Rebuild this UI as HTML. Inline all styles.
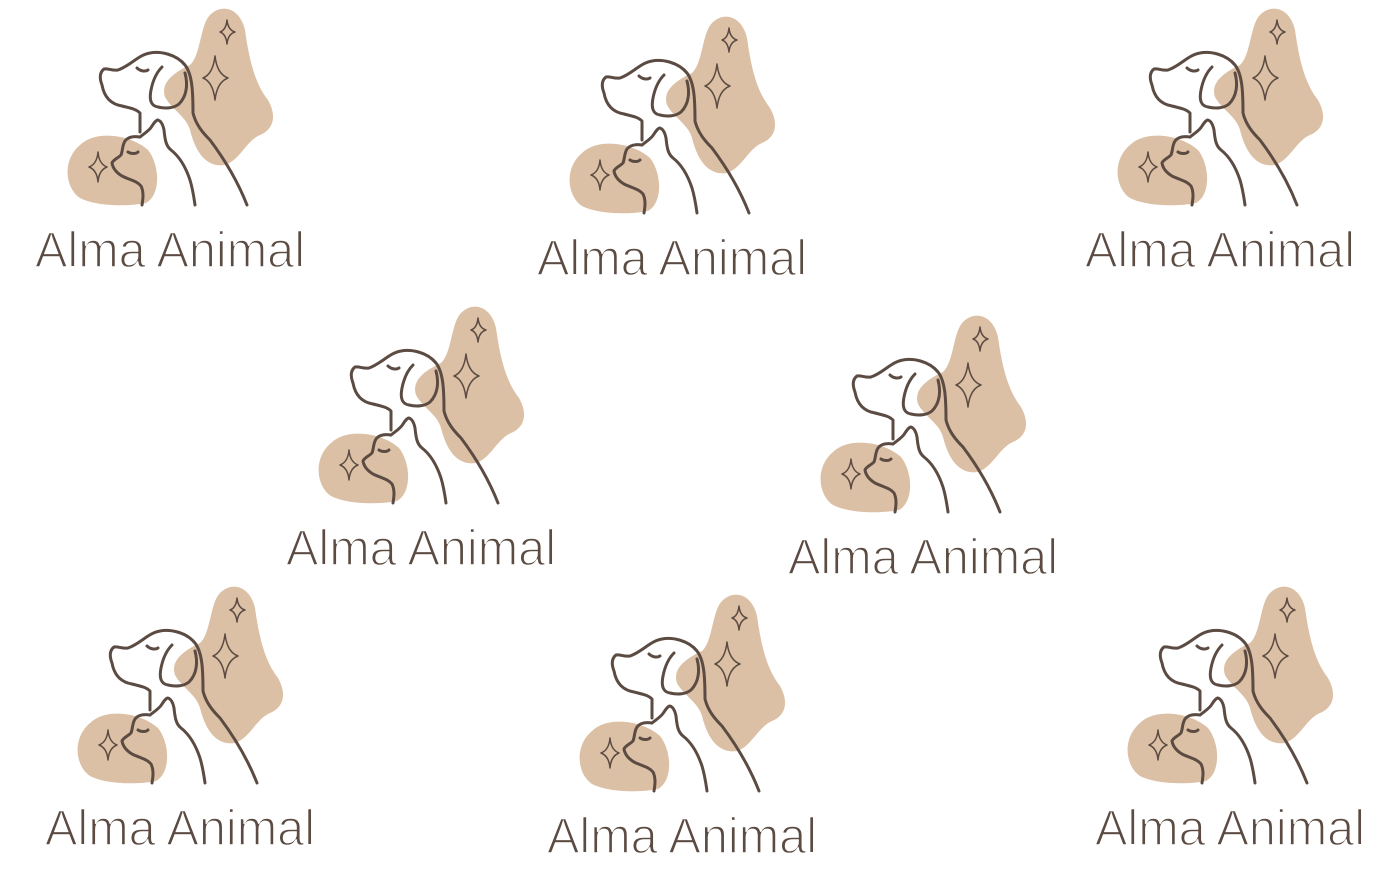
<!DOCTYPE html>
<html><head><meta charset="utf-8"><style>
html,body{margin:0;padding:0;background:#fff;}
svg{display:block}
text{font-family:"Liberation Sans",sans-serif;font-size:50px;fill:#5b4b42;stroke:#fff;stroke-width:1.6px;}
</style></head><body>
<svg width="1400" height="877" viewBox="0 0 1400 877" xmlns="http://www.w3.org/2000/svg">
<defs>
<g id="logo">
 <path fill="#dcc0a5" d="M210,15 C222,3 240,8 245,30 C249,58 254,82 268,100 C278,118 272,130 260,135 C246,141 240,160 225,165 C205,168 195,150 190,130 C186,116 172,110 165,97 C160,82 175,72 190,65 C201,55 200,25 210,15 Z"/>
 <path fill="#dcc0a5" d="M80,145 C95,130 130,134 148,150 C160,165 161,195 146,203 C126,207 95,206 80,198 C65,188 62,160 80,145 Z"/>
 <g fill="none" stroke="#5b4b42" stroke-width="3" stroke-linecap="round" stroke-linejoin="round">
  <path d="M140,132 L140,113 C136,109 130,108 122,106 C110,104 104,96 102,85 C99,77 100,72 104,69 C108,68 112,71 118,70 C130,66 138,55 150,53 C160,51 176,54 185,65 C192,74 193,90 193,113 C196,125 203,133 210,140 C225,160 238,182 247,205"/>
  <path d="M162,67 C157,72 153,80 151,90 C149,100 151,106 158,107 C166,109 174,108 179,104 C187,96 188,84 185,73"/>
  <path d="M137,68 C140,71 145,72 148,70"/>
  <path d="M140,137 C145,133 150,130 152,126 C154,123 156,120 158,120 C161,121 163,125 164,130 C165,140 166,146 171,150 C180,157 186,168 190,180 C193,190 194,198 195,205"/>
  <path d="M140,137 C133,136 128,137 125,141 C122,146 123,150 121,155 C118,158 113,160 112,163 C113,169 117,173 122,176 C130,180 137,181 141,186 C144,192 143,199 142,205"/>
  <path d="M128,152 C131,154 136,154 138,152"/>
 </g>
 <g fill="none" stroke="#5b4b42" stroke-width="1.5" stroke-linejoin="round">
  <path d="M227,20 Q228,30 235,32 Q228,34 227,44 Q226,34 220,32 Q226,30 227,20 Z"/>
  <path d="M215,56 Q217,74 228,78 Q217,82 215,100 Q213,82 203,78 Q213,74 215,56 Z"/>
  <path d="M98,152 Q99,164 107,167 Q99,170 98,182 Q97,170 89,167 Q97,164 98,152 Z"/>
 </g>
</g>
</defs>
<use href="#logo" x="0" y="0"/>
<use href="#logo" x="502" y="8"/>
<use href="#logo" x="1050" y="0"/>
<use href="#logo" x="251" y="298"/>
<use href="#logo" x="753" y="307"/>
<use href="#logo" x="10" y="578"/>
<use href="#logo" x="512" y="586"/>
<use href="#logo" x="1060" y="578"/>
<text x="35" y="267" textLength="270" lengthAdjust="spacingAndGlyphs">Alma Animal</text>
<text x="537" y="275" textLength="270" lengthAdjust="spacingAndGlyphs">Alma Animal</text>
<text x="1085" y="267" textLength="270" lengthAdjust="spacingAndGlyphs">Alma Animal</text>
<text x="286" y="565" textLength="270" lengthAdjust="spacingAndGlyphs">Alma Animal</text>
<text x="788" y="574" textLength="270" lengthAdjust="spacingAndGlyphs">Alma Animal</text>
<text x="45" y="845" textLength="270" lengthAdjust="spacingAndGlyphs">Alma Animal</text>
<text x="547" y="853" textLength="270" lengthAdjust="spacingAndGlyphs">Alma Animal</text>
<text x="1095" y="845" textLength="270" lengthAdjust="spacingAndGlyphs">Alma Animal</text>
</svg>
</body></html>
